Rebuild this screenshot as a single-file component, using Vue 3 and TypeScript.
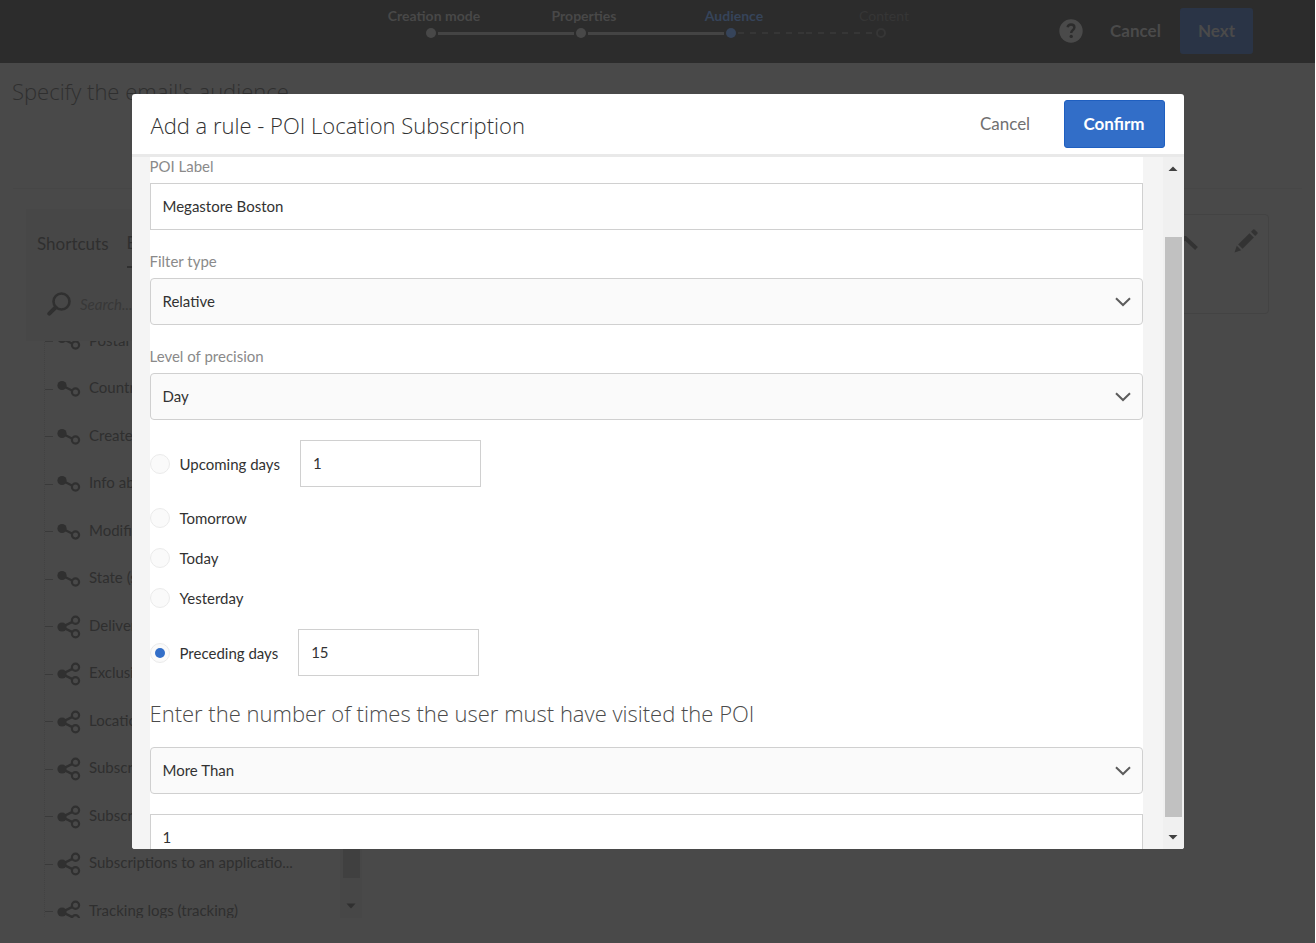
<script setup lang="ts">
import { ref } from 'vue'

interface Step {
  label: string
  state: 'done' | 'current' | 'todo'
}

interface TreeNode {
  label: string
  kind: 'link' | 'share'
}

const steps: Step[] = [
  { label: 'Creation mode', state: 'done' },
  { label: 'Properties', state: 'done' },
  { label: 'Audience', state: 'current' },
  { label: 'Content', state: 'todo' },
]

const nodes: TreeNode[] = [
  { label: 'Postal', kind: 'link' },
  { label: 'Country', kind: 'link' },
  { label: 'Created', kind: 'link' },
  { label: 'Info about', kind: 'link' },
  { label: 'Modified', kind: 'link' },
  { label: 'State (state)', kind: 'link' },
  { label: 'Deliveries', kind: 'share' },
  { label: 'Exclusions', kind: 'share' },
  { label: 'Location', kind: 'share' },
  { label: 'Subscriptions', kind: 'share' },
  { label: 'Subscriptions', kind: 'share' },
  { label: 'Subscriptions to an applicatio...', kind: 'share' },
  { label: 'Tracking logs (tracking)', kind: 'share' },
]

const poiLabel = ref('Megastore Boston')
const filterType = ref('Relative')
const precision = ref('Day')
const period = ref('preceding')
const upcomingDays = ref('1')
const precedingDays = ref('15')
const comparison = ref('More Than')
const visits = ref('1')
</script>

<template>
  <div class="page">
    <header class="topbar">
      <ol class="steps">
        <li v-for="step in steps" :key="step.label" class="step" :class="step.state">
          <span class="step-label">{{ step.label }}</span>
          <span class="step-track">
            <i class="line before"></i>
            <i class="dot"></i>
            <i class="line after"></i>
          </span>
        </li>
      </ol>
      <div class="top-actions">
        <button class="help" type="button" aria-label="Help">
          <svg width="24" height="24" viewBox="0 0 24 24">
            <circle cx="12" cy="12" r="11.7" fill="#4a4a4a" />
            <path d="M8.6 8.2C9 6.400 10.300 5.500 12 5.500c2 0 3.400 1.100 3.400 2.900 0 2.700-3.200 2.800-3.200 5.500" fill="none" stroke="#2c2c2c" stroke-width="2.400" />
            <circle cx="12.200" cy="17.400" r="1.700" fill="#2c2c2c" />
          </svg>
        </button>
        <button class="top-cancel" type="button">Cancel</button>
        <button class="top-next" type="button">Next</button>
      </div>
    </header>

    <h1 class="page-title">Specify the email's audience</h1>

    <main class="workspace">
      <aside class="explorer">
        <div class="explorer-head">
          <nav class="tabs">
            <button type="button">Shortcuts</button>
            <button type="button" class="active">Explorer</button>
          </nav>
          <label class="search">
            <svg width="24" height="24" viewBox="0 0 24 24">
              <circle cx="14.500" cy="9.500" r="8" fill="none" stroke="#303030" stroke-width="2.600" />
              <path d="M8.500 15.500L2.300 21.700" stroke="#303030" stroke-width="4" stroke-linecap="round" />
            </svg>
            <input type="text" placeholder="Search..." aria-label="Search" />
          </label>
        </div>
        <div class="tree">
          <ul>
            <li v-for="(node, i) in nodes" :key="i">
              <i class="branch"></i>
              <svg v-if="node.kind === 'link'" width="24" height="24" viewBox="0 0 24 24">
                <path d="M5 8.500L15 13.500" stroke="#303030" stroke-width="2.200" />
                <circle cx="5" cy="8.500" r="4.600" fill="#303030" />
                <circle cx="18.500" cy="15" r="3.600" fill="none" stroke="#303030" stroke-width="2.200" />
              </svg>
              <svg v-else width="24" height="24" viewBox="0 0 24 24">
                <path d="M15.500 6.800L5 12L15.500 17.200" fill="none" stroke="#303030" stroke-width="2.400" />
                <circle cx="5" cy="12" r="4.600" fill="#303030" />
                <circle cx="18.500" cy="5.200" r="3.600" fill="none" stroke="#303030" stroke-width="2.200" />
                <circle cx="18.500" cy="18.800" r="3.600" fill="none" stroke="#303030" stroke-width="2.200" />
              </svg>
              <span>{{ node.label }}</span>
            </li>
          </ul>
          <div class="tree-scroll">
            <i class="tree-thumb"></i>
            <svg width="10" height="6" viewBox="0 0 10 6"><path d="M0.500 0.500h9L5 5.500z" fill="#303030" /></svg>
          </div>
        </div>
      </aside>
      <section class="card">
        <svg width="26" height="14" viewBox="0 0 26 14"><path d="M1.500 12.500L13 1.800L24.500 12.500" fill="none" stroke="#333" stroke-width="4" /></svg>
        <svg width="26" height="26" viewBox="0 0 26 26" fill="#333">
          <path d="M1.500 24.500L3.800 17.800L8.200 22.200z" />
          <path d="M5.200 16.400L16.500 5.200L20.800 9.500L9.600 20.800z" />
          <path d="M18 3.800L20.200 1.600Q21 1 21.800 1.700L24.400 4.300Q25 5.100 24.400 5.800L22.200 8z" />
        </svg>
      </section>
    </main>

    <div class="overlay">
      <form class="dialog" role="dialog" aria-labelledby="dialog-title" @submit.prevent>
        <header class="dialog-head">
          <h2 id="dialog-title">Add a rule - POI Location Subscription</h2>
          <button type="button" class="cancel">Cancel</button>
          <button type="submit" class="confirm">Confirm</button>
        </header>
        <div class="dialog-body">
          <div class="fields">
            <div class="field">
              <label for="poi">POI Label</label>
              <input id="poi" v-model="poiLabel" class="box" type="text" />
            </div>
            <div class="field">
              <label for="filter">Filter type</label>
              <div class="select">
                <select id="filter" v-model="filterType" class="box"><option>Relative</option></select>
                <svg width="16" height="10" viewBox="0 0 16 10"><path d="M1 1.200L8 8L15 1.200" /></svg>
              </div>
            </div>
            <div class="field">
              <label for="precision">Level of precision</label>
              <div class="select">
                <select id="precision" v-model="precision" class="box"><option>Day</option></select>
                <svg width="16" height="10" viewBox="0 0 16 10"><path d="M1 1.200L8 8L15 1.200" /></svg>
              </div>
            </div>

            <div class="radios">
              <div class="radio-row">
                <label><input v-model="period" type="radio" name="period" value="upcoming" />Upcoming days</label>
                <input v-model="upcomingDays" class="box short" type="text" aria-label="Number of upcoming days" />
              </div>
              <div class="radio-group">
                <label><input v-model="period" type="radio" name="period" value="tomorrow" />Tomorrow</label>
                <label><input v-model="period" type="radio" name="period" value="today" />Today</label>
                <label><input v-model="period" type="radio" name="period" value="yesterday" />Yesterday</label>
              </div>
              <div class="radio-row">
                <label><input v-model="period" type="radio" name="period" value="preceding" />Preceding days</label>
                <input v-model="precedingDays" class="box short" type="text" aria-label="Number of preceding days" />
              </div>
            </div>

            <h3 id="visits-title">Enter the number of times the user must have visited the POI</h3>
            <div class="select">
              <select v-model="comparison" class="box" aria-labelledby="visits-title"><option>More Than</option></select>
              <svg width="16" height="10" viewBox="0 0 16 10"><path d="M1 1.200L8 8L15 1.200" /></svg>
            </div>
            <input v-model="visits" class="box visits" type="text" aria-labelledby="visits-title" />
          </div>
          <div class="scrollbar">
            <svg width="10" height="6" viewBox="0 0 10 6"><path d="M0.500 5h9L5 0.500z" fill="#404040" /></svg>
            <i class="thumb"></i>
            <svg width="10" height="6" viewBox="0 0 10 6"><path d="M0.500 1h9L5 5.500z" fill="#404040" /></svg>
          </div>
        </div>
      </form>
    </div>
  </div>
</template>

<style>
body {
  margin: 0;
  background: #fff;
}
</style>

<style scoped>
* {
  box-sizing: border-box;
}

.page {
  position: relative;
  display: flex;
  flex-direction: column;
  height: 100vh;
  margin-right: 1px;
  overflow: hidden;
  background: #494949;
  color: #2f2f2f;
  font: 15px/20px Lato, "Open Sans", sans-serif;
}

button,
input,
select {
  margin: 0;
  padding: 0;
  border: 0;
  background: none;
  color: inherit;
  font: inherit;
}

ul,
ol {
  margin: 0;
  padding: 0;
  list-style: none;
}

h1,
h2,
h3 {
  margin: 0;
  font: 300 22px/28px "Open Sans", Lato, sans-serif;
}

svg {
  display: block;
  flex: none;
}

/* Top bar */
.topbar {
  display: grid;
  grid-template-columns: 1fr auto 1fr;
  flex: none;
  height: 63px;
  padding-right: 3px;
  background: #2c2c2c;
}

.steps {
  display: flex;
  grid-column: 2;
  padding-top: 6px;
}

.step {
  width: 150px;
  color: #484848;
  font-size: 14px;
  font-weight: 700;
}

.step-label {
  display: block;
  padding-left: 6px;
  text-align: center;
}

.step.current {
  color: #36445a;
}

.step.todo {
  color: #363636;
  font-weight: 400;
}

.step-track {
  display: flex;
  align-items: center;
  gap: 2px;
  margin-top: 2px;
}

.dot {
  width: 10px;
  height: 10px;
  border-radius: 50%;
  background: currentColor;
}

.todo .dot {
  border: 2px solid #363636;
  background: none;
}

.line {
  flex: 1;
  height: 3px;
  background: #444;
}

.current .after,
.todo .before {
  height: 2px;
  background: repeating-linear-gradient(90deg, #363636 0 6px, transparent 6px 12px);
}

.step:first-child .before,
.step:last-child .after {
  visibility: hidden;
}

.top-actions {
  display: flex;
  align-items: center;
  justify-content: flex-end;
  height: 62px;
  padding-right: 59px;
  color: #4a4a4a;
  font-size: 17px;
}

.top-cancel {
  width: 97px;
  padding-left: 8px;
  font-weight: 700;
}

.top-next {
  width: 73px;
  height: 46px;
  border-radius: 3px;
  background: #2a3446;
  font-weight: 700;
}

/* Page under the dialog */
.page-title {
  padding: 14px 12px 0;
}

.workspace {
  display: flex;
  align-items: flex-start;
  flex: 1;
  min-height: 0;
  gap: 24px;
  margin: 83px 13px 0;
  padding: 20px 33px 25px 13px;
  border-top: 1px solid #464646;
}

.explorer {
  display: flex;
  flex-direction: column;
  width: 336px;
  height: 100%;
}

.explorer-head {
  height: 132px;
  padding: 20px 11px 0;
  background: #474747;
}

.tabs {
  display: flex;
  gap: 18px;
  font-size: 17px;
}

.tabs button {
  height: 39px;
  padding-bottom: 10px;
}

.tabs .active {
  border-bottom: 2px solid #303030;
}

.search {
  display: flex;
  align-items: center;
  gap: 9px;
  margin: 24px 0 0 10px;
}

.search input {
  width: 160px;
  font-style: italic;
}

.search input::placeholder {
  color: #383838;
}

.tree {
  display: flex;
  flex: 1;
  justify-content: space-between;
  min-height: 0;
  overflow: hidden;
}

.tree ul {
  align-self: flex-start;
  margin: -23px 0 0 18px;
  border-left: 1px dotted #424242;
}

.tree li {
  display: flex;
  align-items: center;
  height: 47px;
}

.tree li:nth-child(even) {
  height: 48px;
}

.branch {
  width: 8px;
  height: 1px;
  margin-right: 4px;
  background: #3a3a3a;
}

.tree li span {
  padding: 0 0 4px 8px;
}

.tree-scroll {
  display: flex;
  flex-direction: column;
  align-items: center;
  gap: 25px;
  width: 22px;
  padding-bottom: 9px;
  background: #474747;
}

.tree-thumb {
  flex: 1;
  width: 17px;
  background: #404040;
}

.card {
  display: flex;
  align-items: flex-start;
  justify-content: flex-end;
  flex: 1;
  gap: 35px;
  height: 100px;
  margin-top: 5px;
  padding: 13px 9px;
  border: 1px solid #434343;
  border-radius: 4px;
}

.card svg:first-child {
  margin-top: 8px;
}

/* Dialog */
.overlay {
  position: absolute;
  inset: 0;
  display: flex;
  align-items: center;
  justify-content: center;
}

.dialog {
  display: flex;
  flex-direction: column;
  width: 80%;
  height: 80%;
  overflow: hidden;
  border-radius: 3px;
  background: #fff;
  color: #323232;
}

.dialog-head {
  display: flex;
  align-items: center;
  flex: none;
  height: 63px;
  padding: 0 19px;
  border-bottom: 3px solid #e9e9e9;
  font-size: 17px;
}

.dialog-head h2 {
  flex: 1;
  padding-top: 2px;
}

.cancel {
  width: 117px;
  color: #707070;
}

.confirm {
  width: 101px;
  height: 48px;
  border: 1px solid #1f5fc0;
  border-radius: 3px;
  background: #326ec8;
  color: #fff;
  font-weight: 700;
}

.dialog-body {
  display: flex;
  flex: 1;
  min-height: 0;
  padding-left: 18px;
  overflow: hidden;
  background: #f4f4f4;
}

.fields {
  flex: 1;
  align-self: flex-start;
  margin-right: 20px;
  background: #fff;
}

.field {
  margin-bottom: 22px;
}

.field label {
  display: block;
  height: 26px;
  color: #8a8a8a;
  line-height: 18px;
}

.box {
  display: block;
  width: 100%;
  height: 47px;
  padding: 0 12px 2px;
  border: 1px solid #d0d0d0;
  background: #fff;
}

.select {
  position: relative;
}

.select select {
  border-radius: 4px;
  background: #fafafa;
  appearance: none;
}

.select svg {
  position: absolute;
  top: 19px;
  right: 12px;
  fill: none;
  stroke: #5c5c5c;
  stroke-width: 2;
  pointer-events: none;
}

.radios {
  display: flex;
  flex-direction: column;
  gap: 11px;
  margin-top: -2px;
}

.radio-row {
  display: flex;
  align-items: center;
  gap: 20px;
}

.radio-group {
  display: flex;
  flex-direction: column;
  align-items: flex-start;
}

.radios label {
  display: flex;
  align-items: center;
  gap: 10px;
  height: 40px;
}

.radios input[type='radio'] {
  display: grid;
  place-content: center;
  width: 20px;
  height: 20px;
  border: 1px solid #ebebeb;
  border-radius: 50%;
  background: #fafafa;
  appearance: none;
}

.radios input[type='radio']:checked::before {
  width: 10px;
  height: 10px;
  border-radius: 50%;
  background: #326ec8;
  content: '';
}

.short {
  width: 181px;
}

h3 {
  padding: 23px 0 20px;
  color: #4b4b4b;
}

.visits {
  margin-top: 20px;
}

.scrollbar {
  display: flex;
  flex-direction: column;
  align-items: center;
  width: 21px;
  padding: 9px 0;
  background: #f0f0f0;
}

.thumb {
  flex: 1;
  width: 17px;
  margin: 65px 0 17px;
  background: #c1c1c1;
}
</style>
